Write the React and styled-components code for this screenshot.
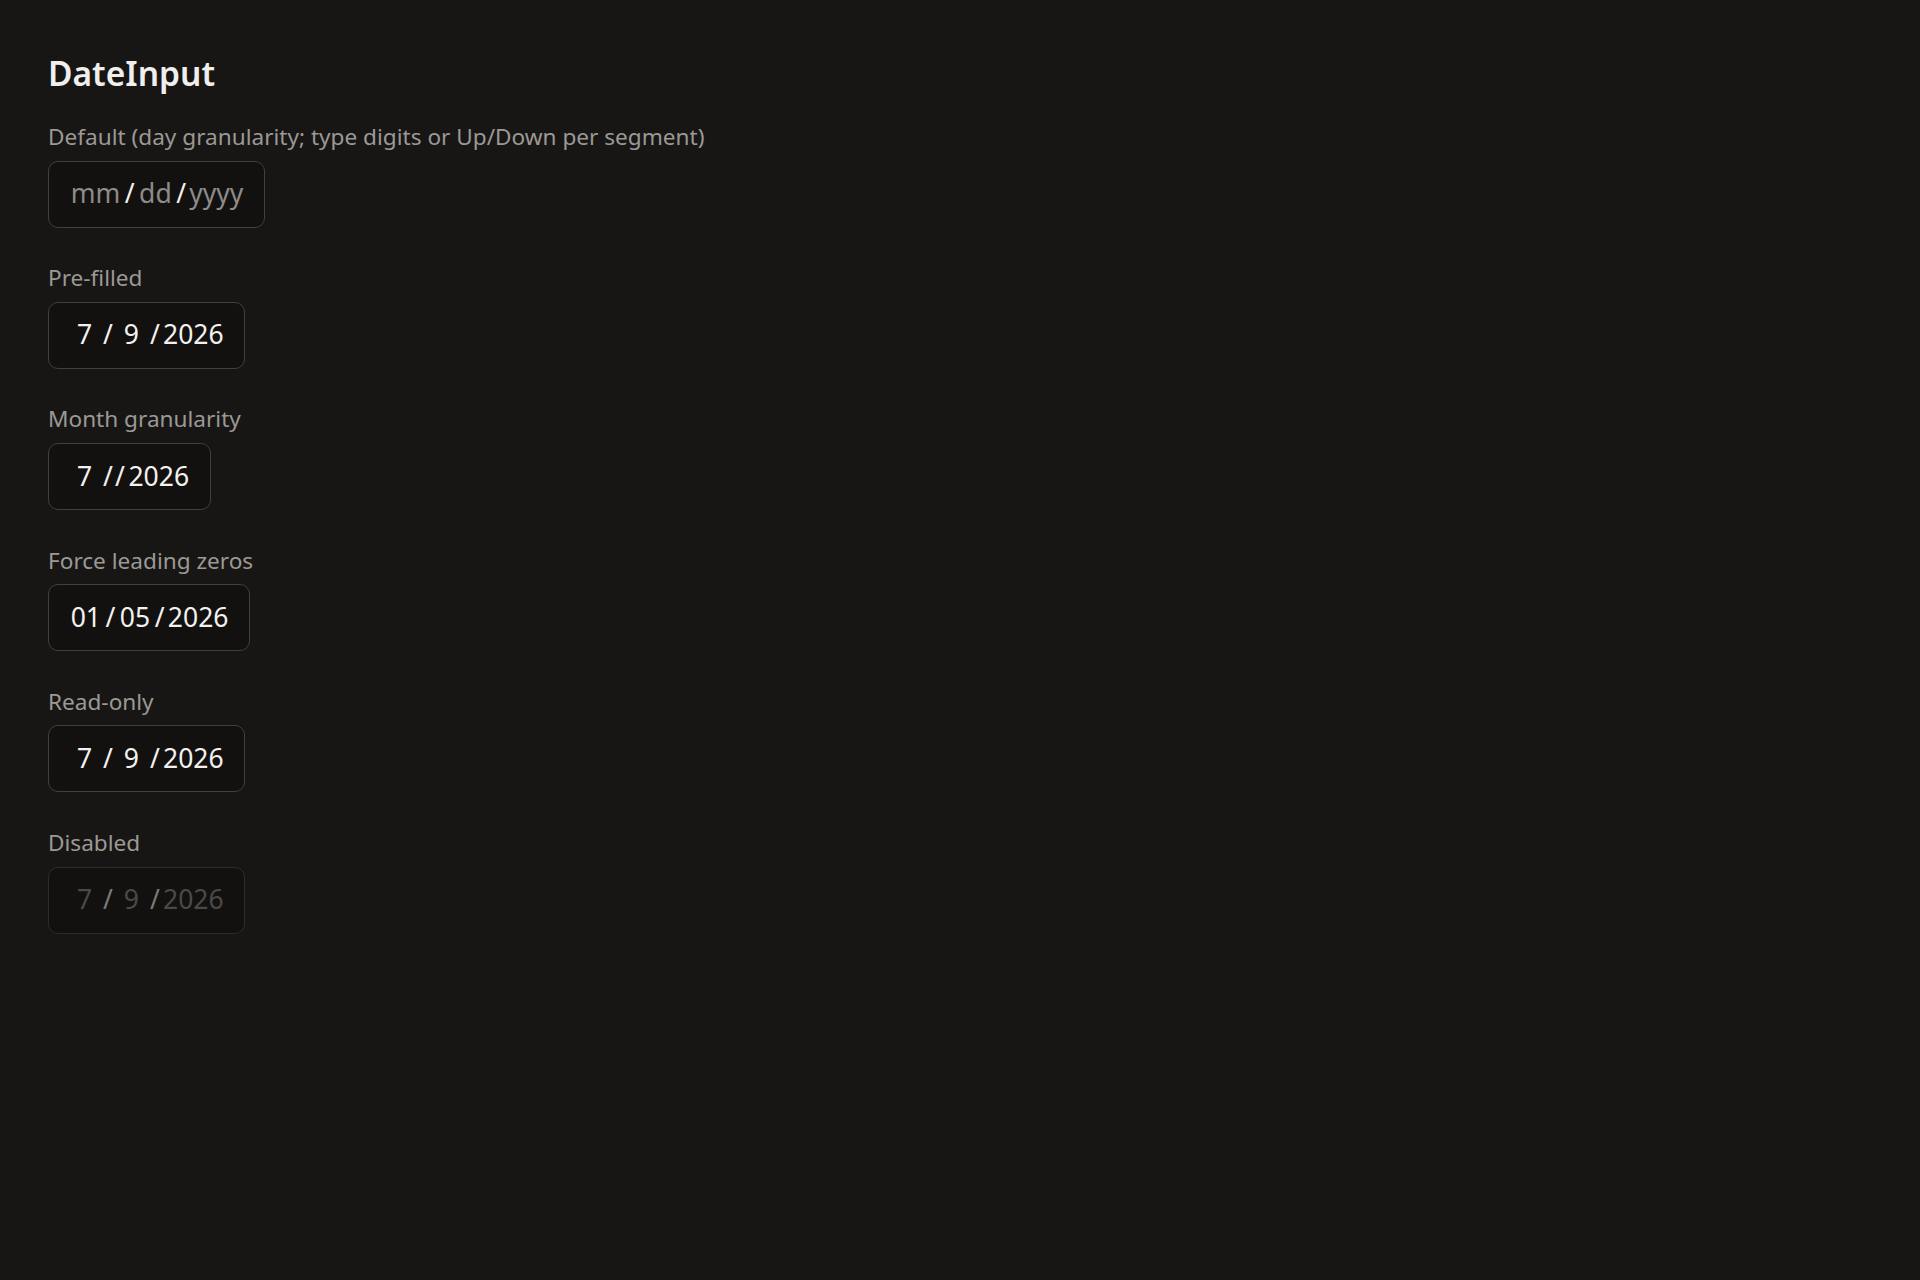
import React from "react";
import styled, { createGlobalStyle } from "styled-components";

const GlobalStyle = createGlobalStyle`
  html, body {
    margin: 0;
    padding: 0;
    background: #171615;
  }
  body {
    font-family: "Noto Sans", "Open Sans", sans-serif;
    color: #efedeb;
  }
`;

const Page = styled.div`
  min-height: 1280px;
  box-sizing: border-box;
  padding: 49px 48px 48px;
  background: #171615;
`;

const Title = styled.h1`
  margin: 0 0 22px;
  font-size: 33.5px;
  line-height: 49px;
  font-weight: 600;
  color: #f1efed;
`;

const Stack = styled.div`
  display: flex;
  flex-direction: column;
  gap: 33.6px;
`;

const Field = styled.div`
  display: flex;
  flex-direction: column;
  align-items: flex-start;
  gap: 7px;
`;

const Label = styled.div`
  font-size: 22.6px;
  line-height: 33.6px;
  color: #9c9995;
`;

const Box = styled.div`
  display: inline-flex;
  align-items: center;
  box-sizing: border-box;
  height: 67px;
  padding: 0 20.5px;
  border: 1px solid ${(p) => (p.$disabled ? "#2d2c2b" : "#42403e")};
  border-radius: 10px;
  background: #121110;
  font-size: 26.5px;
  line-height: 1.5;
  white-space: pre;
`;

const Segment = styled.span`
  display: inline-block;
  box-sizing: border-box;
  min-width: ${(p) => (p.$kind === "year" ? "0" : "2ch")};
  padding: ${(p) => (p.$kind === "year" ? "0" : "0 1.2px")};
  text-align: center;
  color: ${(p) =>
    p.$disabled ? "#4b4947" : p.$placeholder ? "#8e8b88" : "#f3f1ef"};
`;

const Sep = styled.span`
  padding: ${(p) => (p.$double ? "0 1.6px 0 3.3px" : "0 3.3px")};
  letter-spacing: ${(p) => (p.$double ? "2px" : "0")};
  color: ${(p) => (p.$disabled ? "#7c7a77" : "#f3f1ef")};
`;

const DateBox = ({ month, day, year, disabled, placeholder, noDay }) => (
  <Box $disabled={disabled}>
    <Segment $kind="month" $placeholder={placeholder} $disabled={disabled}>
      {month}
    </Segment>
    {noDay ? (
      <Sep $double $disabled={disabled}>//</Sep>
    ) : (
      <>
        <Sep $disabled={disabled}>/</Sep>
        <Segment $kind="day" $placeholder={placeholder} $disabled={disabled}>
          {day}
        </Segment>
        <Sep $disabled={disabled}>/</Sep>
      </>
    )}
    <Segment $kind="year" $placeholder={placeholder} $disabled={disabled}>
      {year}
    </Segment>
  </Box>
);

const examples = [
  {
    label: "Default (day granularity; type digits or Up/Down per segment)",
    props: { month: "mm", day: "dd", year: "yyyy", placeholder: true },
  },
  { label: "Pre-filled", props: { month: "7", day: "9", year: "2026" } },
  { label: "Month granularity", props: { month: "7", year: "2026", noDay: true } },
  { label: "Force leading zeros", props: { month: "01", day: "05", year: "2026" } },
  { label: "Read-only", props: { month: "7", day: "9", year: "2026" } },
  { label: "Disabled", props: { month: "7", day: "9", year: "2026", disabled: true } },
];

export default function App() {
  return (
    <>
      <GlobalStyle />
      <Page>
        <Title>DateInput</Title>
        <Stack>
          {examples.map((ex) => (
            <Field key={ex.label}>
              <Label>{ex.label}</Label>
              <DateBox {...ex.props} />
            </Field>
          ))}
        </Stack>
      </Page>
    </>
  );
}
